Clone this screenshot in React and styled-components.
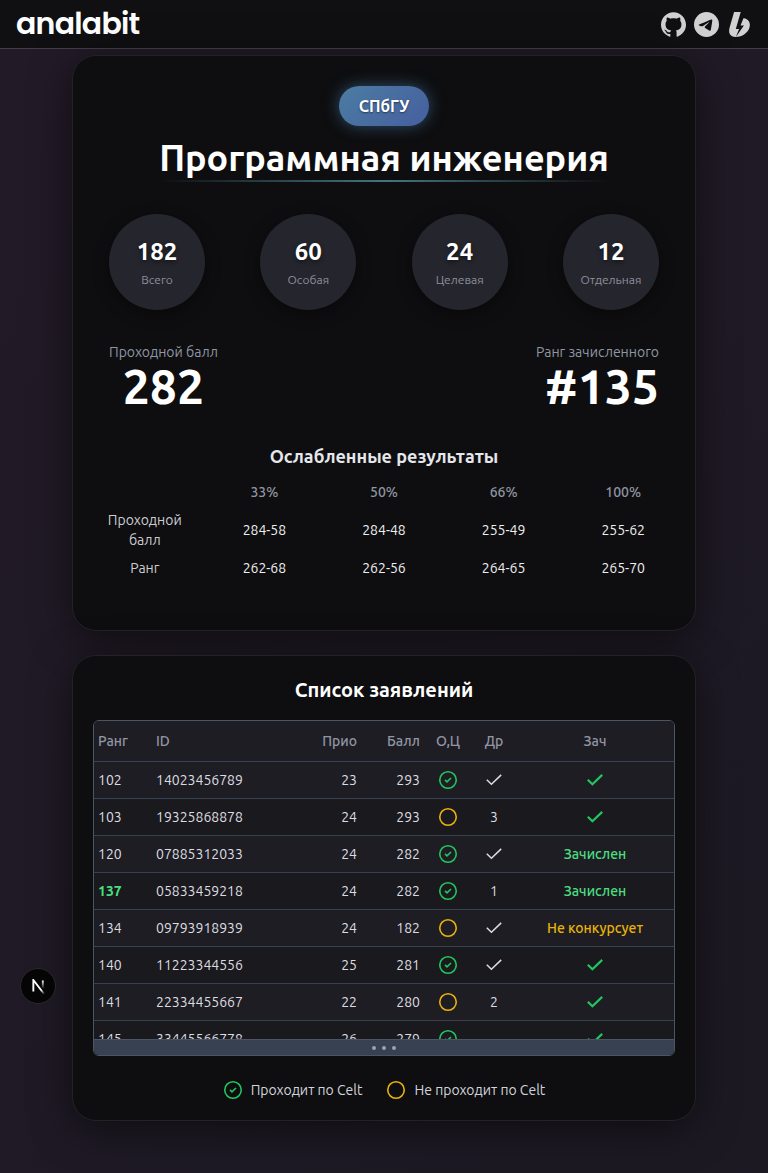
import React from 'react';
import styled, { createGlobalStyle } from 'styled-components';
import { SiGithub, SiTelegram, SiBoosty } from 'react-icons/si';

const GlobalStyle = createGlobalStyle`
  *, *::before, *::after { box-sizing: border-box; }
  body {
    margin: 0;
    min-height: 1173px;
    background: linear-gradient(135deg, #231a27 0%, #1f1a25 50%, #1c1923 100%);
    color: #fff;
    font-family: Ubuntu, 'Noto Sans', sans-serif;
    font-size: 14px;
    line-height: 20px;
  }
  h1, h2, h3, p { margin: 0; }
`;

const Header = styled.header`
  display: flex;
  align-items: center;
  justify-content: space-between;
  height: 49px;
  padding: 0 16px;
  background: #101012;
  border-bottom: 1px solid #414045;
`;

const Logo = styled.div`
  font-family: Poppins, Inter, sans-serif;
  font-weight: 600;
  font-size: 30px;
  line-height: 48px;
  letter-spacing: -0.025em;
`;

const Socials = styled.nav`
  display: flex;
  gap: 8px;
  color: #d1d1d1;
  svg { display: block; width: 25px; height: 25px; }
`;

const Main = styled.main`
  display: flex;
  flex-direction: column;
  gap: 24px;
  width: 624px;
  margin: 0 auto;
  padding: 6px 0 52px;
`;

const Card = styled.section`
  height: ${(p) => p.$height}px;
  padding: ${(p) => p.$padding};
  background: #0e0e10;
  border: 1px solid #232226;
  border-radius: 24px;
  box-shadow: 0 8px 40px rgba(0, 0, 0, 0.5);
`;

const Hero = styled.div`
  display: flex;
  flex-direction: column;
  align-items: center;
`;

const Badge = styled.span`
  display: flex;
  align-items: center;
  justify-content: center;
  width: 90px;
  height: 40px;
  border-radius: 20px;
  background: linear-gradient(135deg, #4b7ca2, #465f9f);
  box-shadow: 0 0 15px rgba(74, 130, 180, 0.55);
  font-size: 16px;
  font-weight: 600;
  text-shadow: 0 1px 2px rgba(0, 0, 0, 0.5);
`;

const Title = styled.h1`
  height: 46px;
  margin-top: 10px;
  font-size: 36px;
  font-weight: 600;
  line-height: 43px;
  text-align: center;
  white-space: nowrap;
`;

const TitleRule = styled.div`
  width: 448px;
  height: 2px;
  margin-top: -2px;
  background: linear-gradient(90deg, transparent, #44757f, transparent);
`;

const Stats = styled.div`
  display: flex;
  justify-content: space-between;
  padding: 0 24px;
  margin-top: 32px;
`;

const Circle = styled.div`
  display: flex;
  flex-direction: column;
  align-items: center;
  width: 96px;
  height: 96px;
  padding-top: 22px;
  border-radius: 50%;
  background: #25252d;
  box-shadow: 0 4px 16px rgba(0, 0, 0, 0.4);
`;

const CircleValue = styled.strong`
  font-size: 24px;
  font-weight: 600;
  line-height: 32px;
  text-shadow: 0 2px 4px rgba(0, 0, 0, 0.5);
`;

const CircleLabel = styled.span`
  margin-top: 4px;
  font-size: 12px;
  line-height: 16px;
  color: #8b8f9a;
`;

const Scores = styled.div`
  display: flex;
  justify-content: space-between;
  padding: 0 24px;
  margin-top: 32px;
`;

const Score = styled.div`
  display: flex;
  flex-direction: column;
  align-items: ${(p) => p.$align};
`;

const ScoreLabel = styled.span`
  color: #9096a3;
`;

const ScoreValue = styled.strong`
  font-size: 48px;
  font-weight: 600;
  line-height: 48px;
`;

const SubTitle = styled.h3`
  margin-top: 32px;
  font-size: 18px;
  font-weight: 600;
  line-height: 28px;
  text-align: center;
  color: #e5e7eb;
`;

const Reduced = styled.div`
  display: grid;
  grid-template-columns: repeat(5, 1fr);
  align-items: center;
  margin-top: 8px;
  text-align: center;
`;

const ReducedCell = styled.span`
  padding: 4px 16px;
  color: ${(p) => (p.$kind === 'head' ? '#8f95a2' : p.$kind === 'label' ? '#cccdd2' : '#eeeeef')};
  font-weight: ${(p) => (p.$kind === 'head' ? 500 : 400)};
`;

const ListTitle = styled.h2`
  font-size: 20px;
  font-weight: 600;
  line-height: 28px;
  text-align: center;
`;

const TableBox = styled.div`
  display: flex;
  flex-direction: column;
  height: 336px;
  margin-top: 16px;
  border: 1px solid #4b5563;
  border-radius: 6px;
  overflow: hidden;
`;

const TableView = styled.div`
  flex: 1;
  min-height: 0;
  overflow: hidden;
`;

const Row = styled.div`
  display: grid;
  grid-template-columns: 58px 138px 71px 63px 48px 44px 158px;
  align-items: center;
  height: ${(p) => (p.$head ? 41 : 37)}px;
  border-bottom: 1px solid #374151;
  background: ${(p) => (p.$head || p.$odd ? '#1e1d23' : '#1a191e')};
  color: ${(p) => (p.$head ? '#9096a3' : '#dcdde0')};
  font-weight: ${(p) => (p.$head ? 500 : 400)};
`;

const Cell = styled.span`
  display: flex;
  align-items: center;
  justify-content: ${(p) => p.$justify || 'center'};
  padding: 0 4px;
  white-space: nowrap;
  ${(p) => p.$color && `color: ${p.$color};`}
  ${(p) => p.$weight && `font-weight: ${p.$weight};`}
`;

const Handle = styled.div`
  display: flex;
  align-items: center;
  justify-content: center;
  gap: 6px;
  height: 16px;
  background: #374151;
  border-top: 1px solid #4b5563;
`;

const Dot = styled.i`
  width: 4px;
  height: 4px;
  border-radius: 50%;
  background: #9ca3af;
`;

const Legend = styled.div`
  display: flex;
  justify-content: center;
  gap: 24px;
  margin-top: 24px;
`;

const LegendItem = styled.span`
  display: flex;
  align-items: center;
  gap: 8px;
  color: #d1d5db;
  white-space: nowrap;
`;

const DevBadge = styled.div`
  position: fixed;
  left: 20px;
  top: 968px;
  width: 36px;
  height: 36px;
  display: flex;
  align-items: center;
  justify-content: center;
  padding: 2px 0 0 2px;
  border-radius: 50%;
  background: #050506;
  border: 1px solid #2a2a2c;
`;

const Icon = styled.svg`
  display: block;
  width: 20px;
  height: 20px;
  flex: none;
  fill: none;
  stroke: ${(p) => p.$color};
  stroke-width: ${(p) => p.$stroke || 1.6};
`;

const Passed = () => (
  <Icon viewBox="0 0 20 20" $color="#22c55e">
    <circle cx="10" cy="10" r="8.25" />
    <path d="M7 9.9 L9 11.8 L13 8" />
  </Icon>
);

const NotPassed = () => (
  <Icon viewBox="0 0 20 20" $color="#eab308">
    <circle cx="10" cy="10" r="8.25" />
  </Icon>
);

const Check = ({ color, stroke }) => (
  <Icon viewBox="0 0 20 20" $color={color} $stroke={stroke}>
    <path d="M2.8 9.7 L7.4 14.2 L17.2 4.9" />
  </Icon>
);

const NMark = () => (
  <svg width="16" height="16" viewBox="0 0 16 16" fill="none">
    <defs>
      <linearGradient id="diag" x1="9.96" y1="11.12" x2="15.48" y2="17.97" gradientUnits="userSpaceOnUse">
        <stop stopColor="#fff" />
        <stop offset="0.604" stopColor="#fff" stopOpacity="0" />
      </linearGradient>
      <linearGradient id="stem" x1="11.82" y1="1.4" x2="11.79" y2="9.63" gradientUnits="userSpaceOnUse">
        <stop stopColor="#fff" />
        <stop offset="1" stopColor="#fff" stopOpacity="0" />
      </linearGradient>
    </defs>
    <path d="M13.3 15.2 L2.34 1 V12.6" stroke="url(#diag)" strokeWidth="1.86" />
    <path d="M11.825 1.5 V13.1" stroke="url(#stem)" strokeWidth="1.86" />
  </svg>
);

const stats = [
  ['182', 'Всего'],
  ['60', 'Особая'],
  ['24', 'Целевая'],
  ['12', 'Отдельная'],
];

const reduced = [
  ['Проходной балл', '284-58', '284-48', '255-49', '255-62'],
  ['Ранг', '262-68', '262-56', '264-65', '265-70'],
];

const rows = [
  ['102', '14023456789', 23, 293, true, 'check', 'check'],
  ['103', '19325868878', 24, 293, false, '3', 'check'],
  ['120', '07885312033', 24, 282, true, 'check', 'Зачислен'],
  ['137', '05833459218', 24, 282, true, '1', 'Зачислен'],
  ['134', '09793918939', 24, 182, false, 'check', 'Не конкурсует'],
  ['140', '11223344556', 25, 281, true, 'check', 'check'],
  ['141', '22334455667', 22, 280, false, '2', 'check'],
  ['145', '33445566778', 26, 279, true, '', 'check'],
];

export default function App() {
  return (
    <>
      <GlobalStyle />
      <Header>
        <Logo>analabit</Logo>
        <Socials>
          <SiGithub />
          <SiTelegram />
          <SiBoosty />
        </Socials>
      </Header>
      <Main>
        <Card $height={576} $padding="30px 12px 0">
          <Hero>
            <Badge>СПбГУ</Badge>
            <Title>Программная инженерия</Title>
            <TitleRule />
          </Hero>
          <Stats>
            {stats.map(([value, label]) => (
              <Circle key={label}>
                <CircleValue>{value}</CircleValue>
                <CircleLabel>{label}</CircleLabel>
              </Circle>
            ))}
          </Stats>
          <Scores>
            <Score $align="center">
              <ScoreLabel>Проходной балл</ScoreLabel>
              <ScoreValue>282</ScoreValue>
            </Score>
            <Score $align="flex-end">
              <ScoreLabel>Ранг зачисленного</ScoreLabel>
              <ScoreValue>#135</ScoreValue>
            </Score>
          </Scores>
          <SubTitle>Ослабленные результаты</SubTitle>
          <Reduced>
            {['', '33%', '50%', '66%', '100%'].map((h) => (
              <ReducedCell key={h} $kind="head">{h}</ReducedCell>
            ))}
            {reduced.flatMap((r) =>
              r.map((v, i) => (
                <ReducedCell key={v} $kind={i === 0 ? 'label' : 'value'}>{v}</ReducedCell>
              ))
            )}
          </Reduced>
        </Card>
        <Card $height={466} $padding="20px 20px 0">
          <ListTitle>Список заявлений</ListTitle>
          <TableBox>
            <TableView>
              <Row $head>
                <Cell $justify="flex-start">Ранг</Cell>
                <Cell $justify="flex-start">ID</Cell>
                <Cell $justify="flex-end">Прио</Cell>
                <Cell $justify="flex-end">Балл</Cell>
                <Cell>О,Ц</Cell>
                <Cell>Др</Cell>
                <Cell>Зач</Cell>
              </Row>
              {rows.map(([rank, id, prio, score, passed, other, result], i) => (
                <Row key={id} $odd={i % 2 === 0}>
                  <Cell
                    $justify="flex-start"
                    $color={rank === '137' ? '#4ade80' : undefined}
                    $weight={rank === '137' ? 700 : undefined}
                  >
                    {rank}
                  </Cell>
                  <Cell $justify="flex-start">{id}</Cell>
                  <Cell $justify="flex-end">{prio}</Cell>
                  <Cell $justify="flex-end">{score}</Cell>
                  <Cell>{passed ? <Passed /> : <NotPassed />}</Cell>
                  <Cell>{other === 'check' ? <Check color="#dcdde0" stroke={1.5} /> : other}</Cell>
                  {result === 'check' ? (
                    <Cell><Check color="#22c55e" stroke={2.2} /></Cell>
                  ) : (
                    <Cell $weight={500} $color={result === 'Зачислен' ? '#4ade80' : '#eab308'}>{result}</Cell>
                  )}
                </Row>
              ))}
            </TableView>
            <Handle><Dot /><Dot /><Dot /></Handle>
          </TableBox>
          <Legend>
            <LegendItem><Passed />Проходит по Celt</LegendItem>
            <LegendItem><NotPassed />Не проходит по Celt</LegendItem>
          </Legend>
        </Card>
      </Main>
      <DevBadge><NMark /></DevBadge>
    </>
  );
}
